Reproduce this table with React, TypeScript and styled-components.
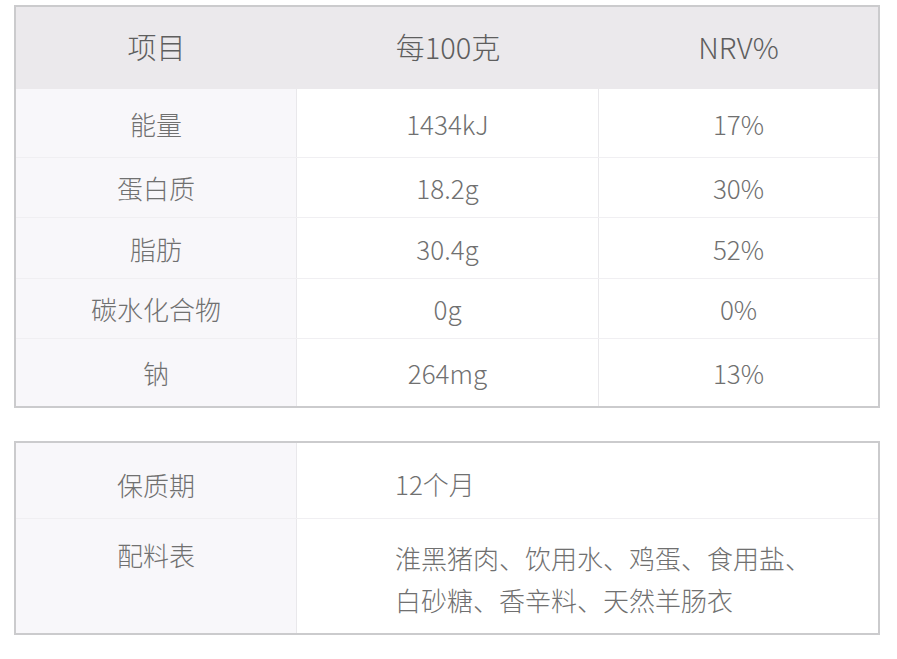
import styled, { createGlobalStyle } from "styled-components";

const GlobalStyle = createGlobalStyle`
    *, *::before, *::after {
        box-sizing: border-box;
    }
    html, body {
        margin: 0;
        padding: 0;
        background: #ffffff;
    }
    body {
        font-family: "Noto Sans CJK SC", "Noto Sans", sans-serif;
        color: #707070;
    }
`;

interface INutrient {
    name: string;
    amount: string;
    nrv: string;
    height: number;
}

const nutrients: INutrient[] = [
    { name: '能量', amount: '1434kJ', nrv: '17%', height: 69 },
    { name: '蛋白质', amount: '18.2g', nrv: '30%', height: 60 },
    { name: '脂肪', amount: '30.4g', nrv: '52%', height: 61 },
    { name: '碳水化合物', amount: '0g', nrv: '0%', height: 60 },
    { name: '钠', amount: '264mg', nrv: '13%', height: 67 },
];

export default function App() {
    return (
        <>
            <GlobalStyle />
            <Page>
                <Table>
                    <HeaderRow>
                        <HeaderCell>项目</HeaderCell>
                        <HeaderCell>每100克</HeaderCell>
                        <HeaderCell>NRV%</HeaderCell>
                    </HeaderRow>
                    {nutrients.map((n, i) => (
                        <Row key={n.name} $height={n.height} $last={i === nutrients.length - 1}>
                            <LabelCell>{n.name}</LabelCell>
                            <ValueCell>{n.amount}</ValueCell>
                            <ValueCell $noDivider>{n.nrv}</ValueCell>
                        </Row>
                    ))}
                </Table>

                <InfoTable>
                    <InfoRow $height={76}>
                        <InfoLabel>保质期</InfoLabel>
                        <InfoValue>12个月</InfoValue>
                    </InfoRow>
                    <InfoRow $height={114} $last>
                        <InfoLabel $top>配料表</InfoLabel>
                        <InfoValue>
                            淮黑猪肉、饮用水、鸡蛋、食用盐、<br />
                            白砂糖、香辛料、天然羊肠衣
                        </InfoValue>
                    </InfoRow>
                </InfoTable>
            </Page>
        </>
    )
}

const Page = styled.div`
    width: 880px;
    padding: 5px 0 0 14px;
    display: flex;
    flex-direction: column;
    gap: 33px;
`;

const Table = styled.div`
    border: 2px solid #cbcbcd;
    display: flex;
    flex-direction: column;
`;

const HeaderRow = styled.div`
    display: grid;
    grid-template-columns: 281px 302px 1fr;
    height: 82px;
    background-color: #ebe9ec;
`;

const HeaderCell = styled.div`
    display: flex;
    align-items: center;
    justify-content: center;
    font-size: 29px;
    font-weight: 300;
    color: #5e5e5e;
    padding-bottom: 4px;
`;

const Row = styled.div<{ $height: number; $last?: boolean }>`
    display: grid;
    grid-template-columns: 281px 302px 1fr;
    height: ${(p) => p.$height}px;
    border-bottom: ${(p) => (p.$last ? 'none' : '1px solid #f0eff2')};
`;

const LabelCell = styled.div`
    display: flex;
    align-items: center;
    justify-content: center;
    background-color: #f8f7fa;
    border-right: 1px solid #e9e8eb;
    font-size: 26px;
    font-weight: 300;
    color: #707070;
`;

const ValueCell = styled.div<{ $noDivider?: boolean }>`
    display: flex;
    align-items: center;
    justify-content: center;
    border-right: ${(p) => (p.$noDivider ? 'none' : '1px solid #e9e8eb')};
    font-size: 26px;
    font-weight: 300;
    color: #707070;
`;

const InfoTable = styled.div`
    border: 2px solid #cbcbcd;
    display: flex;
    flex-direction: column;
`;

const InfoRow = styled.div<{ $height: number; $last?: boolean }>`
    display: grid;
    grid-template-columns: 281px 1fr;
    height: ${(p) => p.$height}px;
    border-bottom: ${(p) => (p.$last ? 'none' : '1px solid #f0eff2')};
`;

const InfoLabel = styled.div<{ $top?: boolean }>`
    display: flex;
    justify-content: center;
    align-items: ${(p) => (p.$top ? 'flex-start' : 'center')};
    padding-top: ${(p) => (p.$top ? '15px' : '8px')};
    background-color: #f8f7fa;
    border-right: 1px solid #e9e8eb;
    font-size: 26px;
    font-weight: 300;
    line-height: 42px;
    color: #707070;
`;

const InfoValue = styled.div`
    display: flex;
    flex-direction: column;
    justify-content: center;
    padding: 6px 0 0 98px;
    font-size: 26px;
    font-weight: 300;
    line-height: 42px;
    color: #707070;
`;
